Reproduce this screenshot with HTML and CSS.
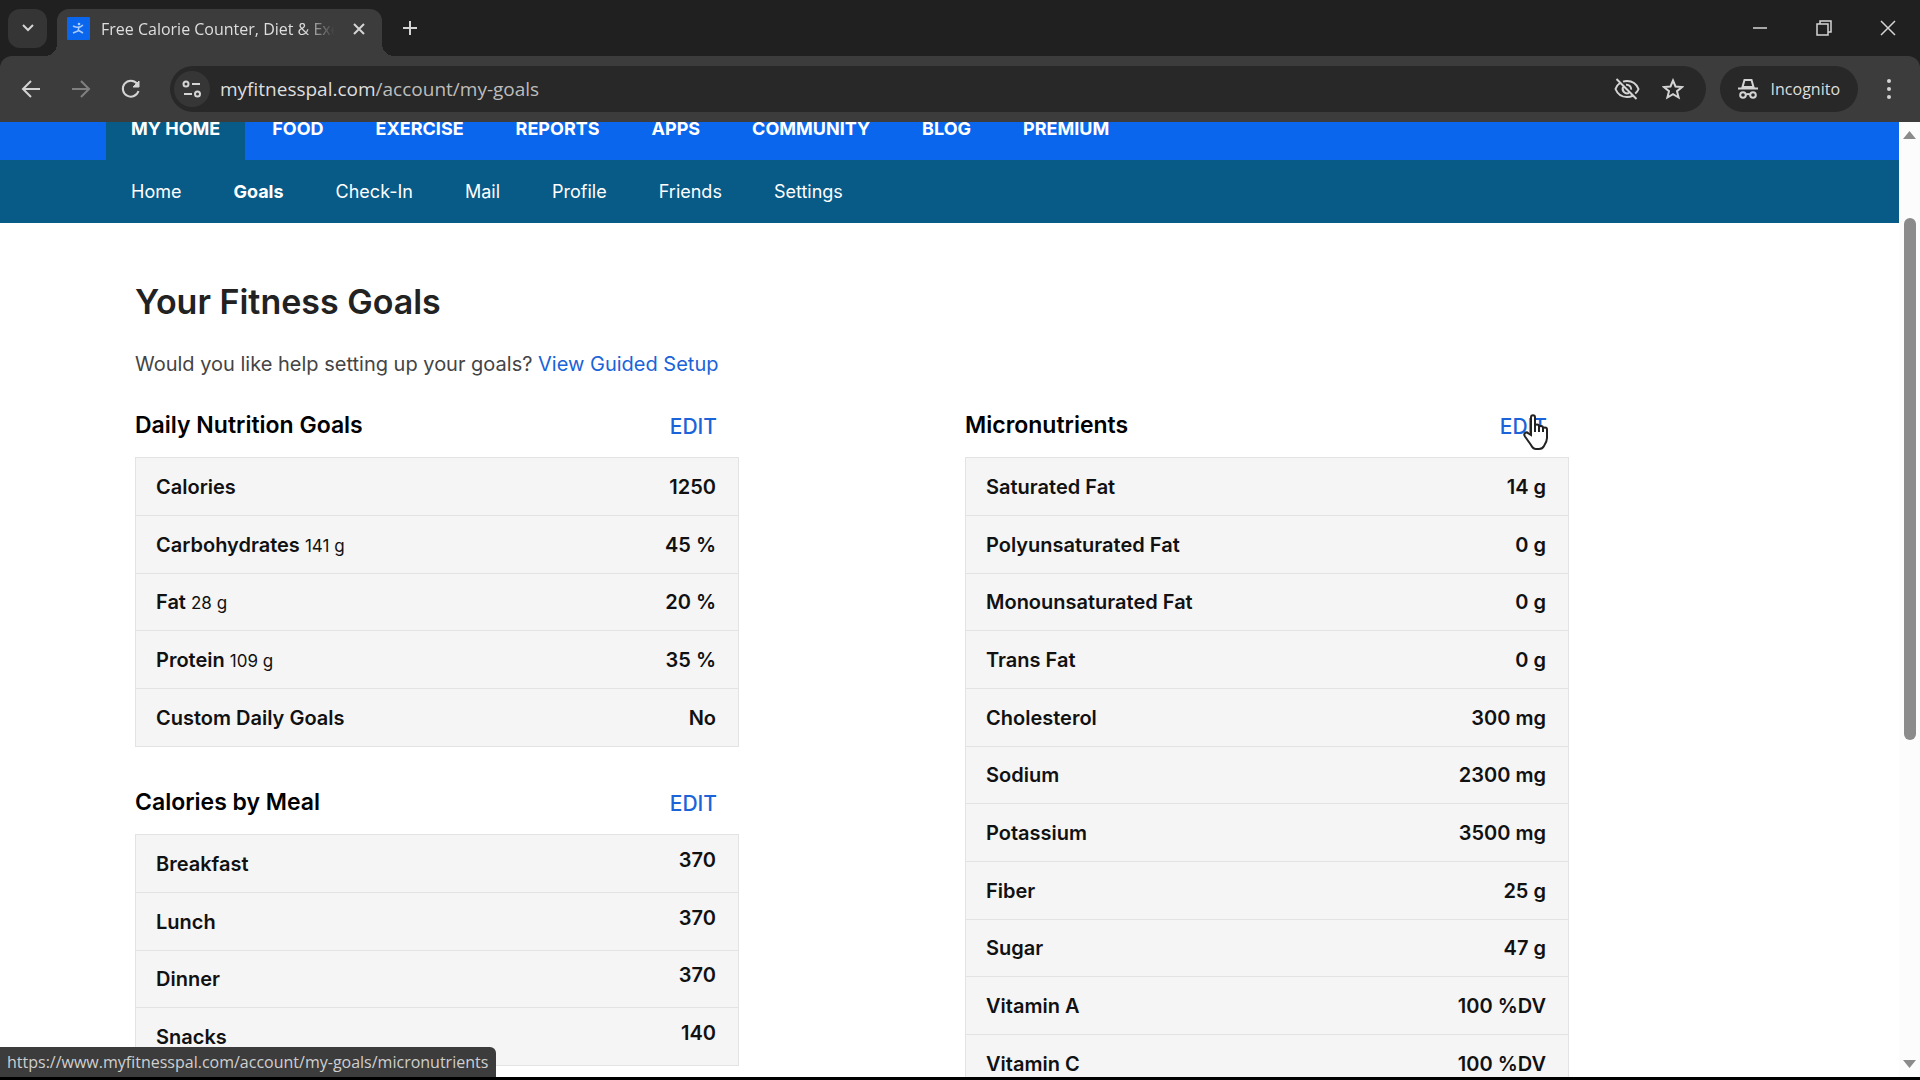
FILE: index.html
```html
<!DOCTYPE html>
<html lang="en">
    <head>
        <meta charset="utf-8">
        <title>Free Calorie Counter, Diet &amp; Exercise Journal</title>
        <meta name="viewport" content="width=device-width, initial-scale=1.0">
        <link rel="stylesheet" href="styles.css">
    </head>
    <body>
        <header class="browser">
            <div class="tabstrip">
                <button class="tab-search" aria-label="Search tabs">
                    <svg width="14" height="10" viewBox="0 0 14 10"><path d="M2 2l5 5 5-5"/></svg>
                </button>
                <div class="tab">
                    <svg class="favicon" width="23" height="23" viewBox="0 0 23 23">
                        <rect width="23" height="23" rx="1" fill="#0b66ee"/>
                        <path d="M6 9q6 3 10-1M12 10l-1 4-5 2M11 13l5 3" fill="none" stroke="#a9cbff" stroke-width="1.500"/>
                        <circle cx="12" cy="7" r="1.300" fill="#a9cbff"/>
                    </svg>
                    <span class="tab-title">Free Calorie Counter, Diet &amp; Exercise</span>
                    <button class="icon" aria-label="Close tab">
                        <svg width="12" height="12" viewBox="0 0 12 12"><path d="M1 1l10 10M11 1L1 11"/></svg>
                    </button>
                </div>
                <button class="icon new-tab" aria-label="New tab">
                    <svg width="16" height="16" viewBox="0 0 16 16"><path d="M8 1v14M1 8h14"/></svg>
                </button>
                <div class="window-buttons">
                    <button class="icon" aria-label="Minimize">
                        <svg width="16" height="16" viewBox="0 0 16 16"><path d="M1 8h14"/></svg>
                    </button>
                    <button class="icon" aria-label="Restore">
                        <svg width="16" height="16" viewBox="0 0 16 16"><path d="M1 4h11v11H1zM4 4V1h11v11h-3"/></svg>
                    </button>
                    <button class="icon" aria-label="Close">
                        <svg width="16" height="16" viewBox="0 0 16 16"><path d="M1 1l14 14M15 1L1 15"/></svg>
                    </button>
                </div>
            </div>
            <div class="toolbar">
                <button class="icon" aria-label="Back">
                    <svg width="20" height="20" viewBox="0 0 20 20"><path d="M19 10H3M10 2l-8 8 8 8"/></svg>
                </button>
                <button class="icon dim" aria-label="Forward">
                    <svg width="20" height="20" viewBox="0 0 20 20"><path d="M1 10h16M10 2l8 8-8 8"/></svg>
                </button>
                <button class="icon" aria-label="Reload">
                    <svg width="20" height="20" viewBox="0 0 20 20"><path d="M16 4.500A8 8 0 1 0 17.500 12"/><path d="M18 2v6h-6z" fill="#d4d4d4" stroke-width="1"/></svg>
                </button>
                <div class="omnibox">
                    <button class="icon site-info" aria-label="Site information">
                        <svg width="20" height="18" viewBox="0 0 20 18">
                            <circle cx="4" cy="4" r="2.500"/><path d="M10 4h8M2 14h8"/><circle cx="15.500" cy="14" r="2.500"/>
                        </svg>
                    </button>
                    <div class="url">myfitnesspal.com<span>/account/my-goals</span></div>
                    <button class="icon" aria-label="Tracking protection">
                        <svg width="26" height="22" viewBox="0 0 26 22">
                            <path d="M6 5C3.500 6.700 2 9 1.500 11c2 5 6 8 11.500 8 2 0 4-.4 5.500-1.200M9 3.600C10.200 3.200 11.500 3 13 3c5.500 0 9.500 3 11.500 8-.6 1.700-1.800 3.300-3.300 4.600M9 9c-1.500 4 2 7.500 6 6M12 6.700c3-.4 5.500 2 5.200 5M2.500 1l20 20"/>
                        </svg>
                    </button>
                    <button class="icon" aria-label="Bookmark this tab">
                        <svg width="22" height="22" viewBox="0 0 22 22"><path d="M11 2.500l2.500 6 6.500.5-5 4.200 1.600 6.300-5.600-3.400-5.600 3.400L7 13.200 2 9l6.500-.5z"/></svg>
                    </button>
                </div>
                <button class="incognito">
                    <svg width="22" height="20" viewBox="0 0 22 20">
                        <path d="M5.500 8L7.500 1h7l2 7z"/><path d="M1 9.500h20"/>
                        <circle cx="6" cy="16" r="2.800"/><circle cx="16" cy="16" r="2.800"/><path d="M8.800 15.500q2.200-1 4.400 0"/>
                    </svg>
                    Incognito
                </button>
                <button class="icon menu" aria-label="Menu">
                    <svg width="6" height="22" viewBox="0 0 6 22"><circle cx="3" cy="3" r="2"/><circle cx="3" cy="11" r="2"/><circle cx="3" cy="19" r="2"/></svg>
                </button>
            </div>
        </header>

        <div class="window">
            <div class="page">
                <nav class="main-nav">
                    <a class="active" href="#">MY HOME</a>
                    <a href="#">FOOD</a>
                    <a href="#">EXERCISE</a>
                    <a href="#">REPORTS</a>
                    <a href="#">APPS</a>
                    <a href="#">COMMUNITY</a>
                    <a href="#">BLOG</a>
                    <a href="#">PREMIUM</a>
                </nav>
                <nav class="sub-nav">
                    <a href="#">Home</a>
                    <a class="active" href="#">Goals</a>
                    <a href="#">Check-In</a>
                    <a href="#">Mail</a>
                    <a href="#">Profile</a>
                    <a href="#">Friends</a>
                    <a href="#">Settings</a>
                </nav>
                <main>
                    <h1>Your Fitness Goals</h1>
                    <p>Would you like help setting up your goals? <a href="#">View Guided Setup</a></p>
                    <div class="columns">
                        <div>
                            <section>
                                <div class="section-head"><h2>Daily Nutrition Goals</h2><a href="#">EDIT</a></div>
                                <table>
                                    <tr><th>Calories</th><td>1250</td></tr>
                                    <tr><th>Carbohydrates <small>141 g</small></th><td>45 %</td></tr>
                                    <tr><th>Fat <small>28 g</small></th><td>20 %</td></tr>
                                    <tr><th>Protein <small>109 g</small></th><td>35 %</td></tr>
                                    <tr><th>Custom Daily Goals</th><td>No</td></tr>
                                </table>
                            </section>
                            <section>
                                <div class="section-head"><h2>Calories by Meal</h2><a href="#">EDIT</a></div>
                                <table class="meals">
                                    <tr><th>Breakfast</th><td>370</td></tr>
                                    <tr><th>Lunch</th><td>370</td></tr>
                                    <tr><th>Dinner</th><td>370</td></tr>
                                    <tr><th>Snacks</th><td>140</td></tr>
                                </table>
                            </section>
                        </div>
                        <div>
                            <section>
                                <div class="section-head">
                                    <h2>Micronutrients</h2>
                                    <a class="hovered" href="#">EDIT
                                        <svg class="hand" width="26" height="36" viewBox="0 0 26 36">
                                            <path d="M8 21V3.500C8 .5 12 .5 12 3.500V14v-2c0-2 4-2 4 .5V15v-1.500c0-2 4-2 4 .5v2-1c0-2 4-2 4 .5V24c0 3-1 5-3 8-1 2-2 3-5 3h-3c-2 0-4-2-5-4L2 22.500C0 19.500 3 17 5.500 19.500z"/>
                                            <path d="M12 13v5M16 14v4M20 15v3"/>
                                        </svg>
                                    </a>
                                </div>
                                <table>
                                    <tr><th>Saturated Fat</th><td>14 g</td></tr>
                                    <tr><th>Polyunsaturated Fat</th><td>0 g</td></tr>
                                    <tr><th>Monounsaturated Fat</th><td>0 g</td></tr>
                                    <tr><th>Trans Fat</th><td>0 g</td></tr>
                                    <tr><th>Cholesterol</th><td>300 mg</td></tr>
                                    <tr><th>Sodium</th><td>2300 mg</td></tr>
                                    <tr><th>Potassium</th><td>3500 mg</td></tr>
                                    <tr><th>Fiber</th><td>25 g</td></tr>
                                    <tr><th>Sugar</th><td>47 g</td></tr>
                                    <tr><th>Vitamin A</th><td>100 %DV</td></tr>
                                    <tr><th>Vitamin C</th><td>100 %DV</td></tr>
                                </table>
                            </section>
                        </div>
                    </div>
                </main>
            </div>
            <div class="scrollbar">
                <svg width="13" height="8" viewBox="0 0 13 8"><path d="M0 8l6.500-8L13 8z"/></svg>
                <div class="track"><div class="thumb"></div></div>
                <svg width="13" height="8" viewBox="0 0 13 8"><path d="M0 0h13L6.500 8z"/></svg>
            </div>
            <div class="status">https://www.myfitnesspal.com/account/my-goals/micronutrients</div>
        </div>
    </body>
</html>
```

FILE: styles.css
```css
* {
    box-sizing: border-box;
    margin: 0;
    padding: 0;
}
body {
    display: flex;
    flex-direction: column;
    height: 100vh;
    overflow: hidden;
    border-bottom: 3px solid #000;
    font-family: Inter, "Liberation Sans", sans-serif;
    font-size: 18px;
    background: #fff;
}
a {
    color: #1a63d8;
    text-decoration: none;
}
button {
    border: 0;
    background: none;
    color: inherit;
    font: inherit;
}
svg {
    display: block;
    flex: none;
}

/* browser chrome */
.browser {
    background: #202020;
    color: #dedede;
    font-family: "Open Sans", "Noto Sans", sans-serif;
}
.browser button svg {
    fill: none;
    stroke: #d4d4d4;
    stroke-width: 2;
}
.icon {
    display: flex;
    align-items: center;
    justify-content: center;
    flex: none;
}
.tabstrip {
    display: flex;
    align-items: center;
    height: 56px;
    padding-left: 8px;
}
.tab-search {
    display: flex;
    align-items: center;
    justify-content: center;
    width: 39px;
    height: 39px;
    border-radius: 12px;
    background: #353535;
}
.tab {
    position: relative;
    display: flex;
    align-items: center;
    align-self: flex-end;
    gap: 11px;
    width: 325px;
    height: 47px;
    margin-left: 10px;
    padding: 0 17px 8px 10px;
    border-radius: 12px 12px 0 0;
    background: #3c3c3c;
}
.tab::before,
.tab::after {
    content: "";
    position: absolute;
    bottom: 0;
    width: 12px;
    height: 12px;
}
.tab::before {
    left: -12px;
    background: radial-gradient(circle at 0 0, transparent 12px, #3c3c3c 12px);
}
.tab::after {
    right: -12px;
    background: radial-gradient(circle at 100% 0, transparent 12px, #3c3c3c 12px);
}
.tab-title {
    flex: 1;
    overflow: hidden;
    white-space: nowrap;
    font-size: 16px;
    mask-image: linear-gradient(to right, #000 84%, transparent 97%);
}
.new-tab {
    width: 36px;
    margin-left: 10px;
}
.window-buttons {
    display: flex;
    margin-left: auto;
}
.window-buttons .icon {
    width: 64px;
    height: 56px;
}
.browser .window-buttons svg {
    stroke-width: 1.5;
}
.toolbar {
    display: flex;
    align-items: center;
    height: 66px;
    padding: 0 12px 0 6px;
    border-radius: 12px 12px 0 0;
    background: #3c3c3c;
}
.toolbar > .icon {
    width: 50px;
    height: 46px;
}
.toolbar > .menu {
    width: 38px;
    margin-left: auto;
}
.browser .menu svg {
    fill: #d4d4d4;
    stroke: none;
}
.dim {
    opacity: .45;
}
.omnibox {
    display: flex;
    align-items: center;
    flex: 1;
    gap: 22px;
    height: 46px;
    margin-left: 14px;
    padding: 0 22px 0 4px;
    border-radius: 23px;
    background: #282828;
}
.site-info {
    width: 36px;
    height: 36px;
    border-radius: 18px;
    background: #363636;
}
.url {
    flex: 1;
    margin-left: -12px;
    font-size: 19px;
}
.url span {
    color: #bdbdbd;
}
.incognito {
    display: flex;
    align-items: center;
    gap: 12px;
    height: 46px;
    margin: 0 12px 0 14px;
    padding: 0 18px 0 17px;
    border-radius: 23px;
    background: #282828;
    font-size: 16px;
}

/* page */
.window {
    position: relative;
    display: flex;
    flex: 1;
    min-height: 0;
}
.page {
    flex: 1;
    overflow: hidden;
}
.main-nav,
.sub-nav {
    display: flex;
    gap: 2px;
    padding-left: 106px;
}
.main-nav {
    height: 38px;
    background: #0b66ee;
    line-height: 14px;
    font-weight: 700;
}
.sub-nav {
    height: 63px;
    background: #085a87;
    line-height: 63px;
}
.main-nav a,
.sub-nav a {
    padding: 0 25px;
    color: #fff;
}
.main-nav .active {
    background: #085a87;
}
.sub-nav .active {
    font-weight: 700;
}
main {
    padding: 59px 135px 0;
    color: #222;
}
h1 {
    font-size: 34px;
    line-height: 40px;
    font-weight: 600;
}
p {
    margin-top: 30px;
    font-size: 20px;
    line-height: 24px;
    color: #444;
}
.columns {
    display: flex;
    gap: 226px;
    margin-top: 29px;
}
.columns > div {
    flex: 0 1 604px;
}
section {
    margin-bottom: 35px;
}
.section-head {
    display: flex;
    align-items: center;
    justify-content: space-between;
    height: 52px;
    padding: 0 22px 12px 0;
}
h2 {
    font-size: 23px;
    font-weight: 600;
    color: #000;
}
.section-head a {
    padding-top: 3px;
    font-size: 21px;
    font-weight: 500;
}
.hovered {
    position: relative;
}
.hand {
    position: absolute;
    top: 3px;
    right: -2px;
    fill: #fff;
    stroke: #222;
    stroke-width: 2;
}
table {
    width: 100%;
    border: 1px solid #e3e3e5;
    border-collapse: collapse;
    background: #f5f5f6;
    color: #111;
}
tr {
    height: 58px;
    border-bottom: 1px solid #e3e3e5;
}
tr:nth-child(3n) {
    height: 57px;
}
th,
td {
    padding: 0 22px 0 20px;
    font-size: 20px;
    font-weight: 600;
    text-align: left;
}
td {
    text-align: right;
}
.meals td {
    padding-bottom: 8px;
}
small {
    font-size: 17px;
    font-weight: 400;
}

.scrollbar {
    display: flex;
    flex-direction: column;
    align-items: center;
    width: 21px;
    padding: 9px 0;
    background: #fcfcfc;
    fill: #8b8b8b;
}
.track {
    flex: 1;
    padding-top: 79px;
}
.thumb {
    width: 12px;
    height: 62%;
    border-radius: 6px;
    background: #8b8b8b;
}
.status {
    position: absolute;
    left: 0;
    bottom: 0;
    padding: 0 8px 0 7px;
    border-radius: 0 6px 0 0;
    background: #3c3c3c;
    color: #cfcfcf;
    font-family: "Open Sans", "Noto Sans", sans-serif;
    font-size: 16px;
    line-height: 30px;
}
```
